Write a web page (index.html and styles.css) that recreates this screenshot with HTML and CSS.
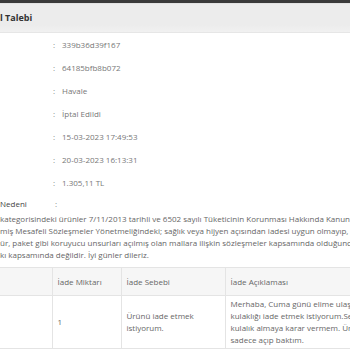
FILE: index.html
```html
<!DOCTYPE html>
<html lang="tr">
<head>
  <meta charset="UTF-8">
  <title>İptal Talebi</title>
  <link rel="stylesheet" href="styles.css">
</head>
<body>

  <!-- Panel -->
  <div class="panel">
    <div class="panel-heading">l Talebi</div>

    <div class="detail-list">
      <div class="detail-row"><span class="colon">:</span><span class="value">339b36d39f167</span></div>
      <div class="detail-row"><span class="colon">:</span><span class="value">64185bfb8b072</span></div>
      <div class="detail-row"><span class="colon">:</span><span class="value">Havale</span></div>
      <div class="detail-row"><span class="colon">:</span><span class="value">İptal Edildi</span></div>
      <div class="detail-row"><span class="colon">:</span><span class="value">15-03-2023 17:49:53</span></div>
      <div class="detail-row"><span class="colon">:</span><span class="value">20-03-2023 16:13:31</span></div>
      <div class="detail-row"><span class="colon">:</span><span class="value">1.305,11 TL</span></div>
    </div>

    <div class="reason">
      <div class="reason-label"><span class="label">Nedeni</span><span class="colon">:</span></div>
      <p class="reason-text">
        kategorisindeki ürünler 7/11/2013 tarihli ve 6502 sayılı Tüketicinin Korunması Hakkında Kanunu<br>
        miş Mesafeli Sözleşmeler Yönetmeliğindeki; sağlık veya hijyen açısından iadesi uygun olmayıp, tek<br>
        ür, paket gibi koruyucu unsurları açılmış olan mallara ilişkin sözleşmeler kapsamında olduğundan<br>
        kı kapsamında değildir. İyi günler dileriz.
      </p>
    </div>

    <!-- Items -->
    <table class="items">
      <colgroup>
        <col class="c-product">
        <col class="c-qty">
        <col class="c-reason">
        <col class="c-desc">
      </colgroup>
      <thead>
        <tr>
          <th></th>
          <th>İade Miktarı</th>
          <th>İade Sebebi</th>
          <th>İade Açıklaması</th>
        </tr>
      </thead>
      <tbody>
        <tr>
          <td></td>
          <td>1</td>
          <td>Ürünü iade etmek<br>istiyorum.</td>
          <td>Merhaba, Cuma günü elime ulaştı<br>kulaklığı iade etmek istiyorum.Sebebi<br>kulalık almaya karar vermem. Ürünü<br>sadece açıp baktım.</td>
        </tr>
      </tbody>
    </table>
  </div>

</body>
</html>
```

FILE: styles.css
```css
body {
  margin: 0;
  font-family: 'Open Sans', 'DejaVu Sans', sans-serif;
  font-size: 8px;
  color: #666;
  background: #fff;
  overflow: hidden;
  width: 350px;
  height: 350px;
}

.panel {
  border-top: 3px solid #3a3a3a;
}

/* Heading */
.panel-heading {
  height: 28px;
  line-height: 28px;
  background: linear-gradient(#ececec, #ececec 75%, #f1f1f1);
  border-top: 1px solid #e2e2e2;
  border-bottom: 1px solid #e6e6e6;
  font-size: 9px;
  font-weight: bold;
  color: #333;
  white-space: nowrap;
}

/* Detail rows */
.detail-row {
  display: flex;
  height: 23px;
  align-items: center;
  color: #777;
}

.colon {
  width: 9px;
  padding-left: 53px;
  color: #888;
}

/* Reason */
.reason-label {
  display: flex;
  align-items: center;
  height: 19px;
  color: #444;
}

.reason-label .label {
  width: 55px;
}

.reason-label .colon {
  padding-left: 0;
}

.reason-text {
  margin: 0;
  line-height: 12px;
  white-space: nowrap;
  color: #666;
}

/* Table */
.items {
  margin-top: 6px;
  width: 520px;
  table-layout: fixed;
  border-collapse: collapse;
}

.c-product { width: 52px; }
.c-qty { width: 69px; }
.c-reason { width: 104px; }
.c-desc { width: 295px; }

.items th,
.items td {
  border: 1px solid #e4e4e4;
  padding: 0 5px;
  text-align: left;
  vertical-align: middle;
  white-space: nowrap;
  color: #666;
}

.items th {
  height: 27px;
  background: #f6f6f6;
  font-weight: normal;
}

.items td {
  height: 52px;
  line-height: 12px;
}

.items tr > :first-child {
  border-left: none;
}
```
